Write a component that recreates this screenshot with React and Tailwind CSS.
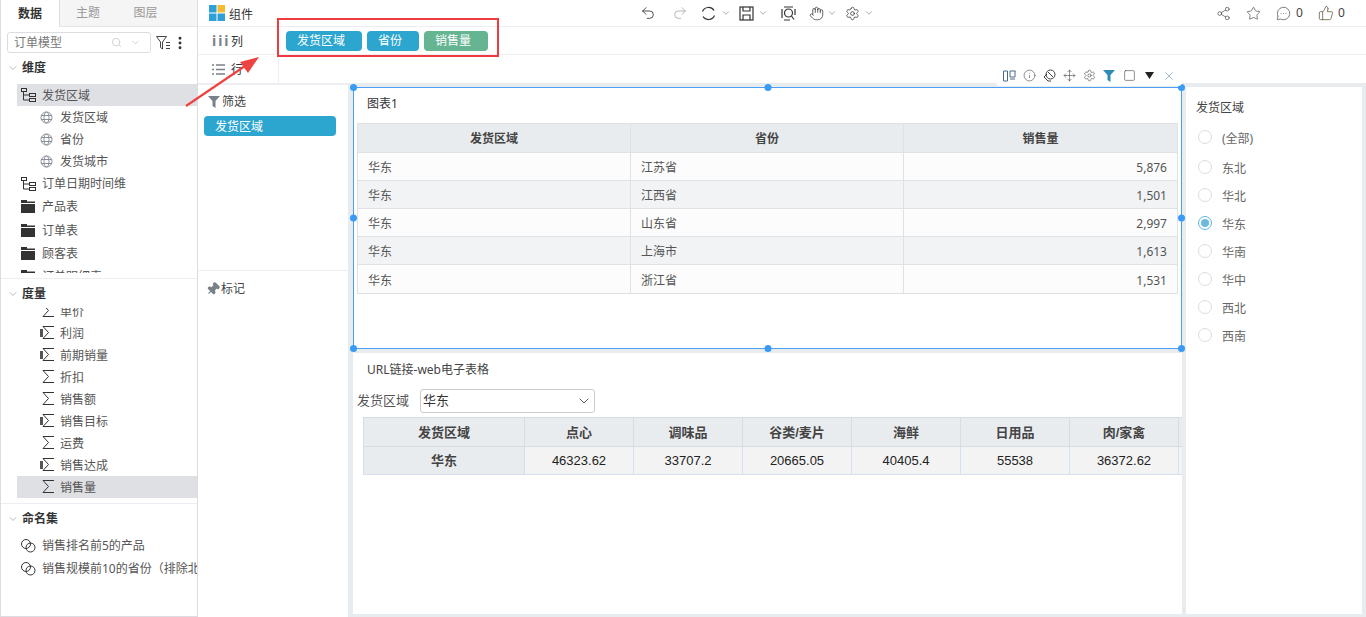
import React from 'react';
import {
  ChevronDown, Search, MoreVertical, Undo2, Redo2, Hand, Settings, Share2, Star,
  MessageCircleMore, ThumbsUp, Info, Move, Square, X, Pin,
} from 'lucide-react';

const font = { fontFamily: '"Noto Sans", "Noto Sans CJK SC", sans-serif' };
const arial = { fontFamily: '"Liberation Sans", "Noto Sans CJK SC", sans-serif' };

function TreeIcon() {
  return (
    <svg width="15" height="14" viewBox="0 0 15 14" fill="none" stroke="#333" strokeWidth="1" className="shrink-0">
      <rect x="0.5" y="0.5" width="5" height="3" />
      <rect x="8.5" y="5.5" width="6" height="3" />
      <rect x="8.5" y="10.5" width="6" height="3" />
      <path d="M2.5 4v8h6M2.5 7h6" />
    </svg>
  );
}

function GlobeIcon() {
  return (
    <svg width="13" height="13" viewBox="0 0 13 13" fill="none" stroke="#8a8f99" strokeWidth="1" className="shrink-0">
      <circle cx="6.5" cy="6.5" r="5.5" />
      <ellipse cx="6.5" cy="6.5" rx="2.5" ry="5.5" />
      <path d="M1 4.500h11M1 8.500h11" />
    </svg>
  );
}

function FolderIcon() {
  return (
    <svg width="14" height="13" viewBox="0 0 14 13" fill="#333" className="shrink-0">
      <path d="M0 0h6v1.500h8V3H0zM0 4h14v9H0z" />
    </svg>
  );
}

function SigmaIcon({ bar }) {
  return (
    <span className="w-[14px] h-[14px] relative shrink-0 block">
      {bar && <span className="absolute left-0 top-[3px] w-[3px] h-[8px] bg-[#555]" />}
      <svg width="12" height="13" viewBox="0 0 12 13" fill="none" stroke="#333" strokeWidth="1" className="absolute left-[2px] top-0">
        <path d="M12 .5H1L6.500 6.500 1 12.500h11" />
      </svg>
    </span>
  );
}

function SetIcon() {
  return (
    <svg width="15" height="14" viewBox="0 0 15 14" fill="none" stroke="#333" strokeWidth="1" className="shrink-0">
      <circle cx="5" cy="5" r="4.500" />
      <circle cx="9.500" cy="8.500" r="4.500" />
    </svg>
  );
}

function Row({ icon, label, indent, active, h = 'h-[22px]' }) {
  return (
    <div className={`flex items-center ${h} ${indent ? 'pl-[23px]' : 'pl-[4px]'} ${active ? 'bg-[#dfe0e3]' : ''}`}>
      <span className={`flex items-center shrink-0 ${indent ? 'w-[20px]' : 'w-[21px]'}`}>{icon}</span>
      <span className="text-[12px] text-[#555] whitespace-nowrap pt-[1px]">{label}</span>
    </div>
  );
}

function SectionHead({ label }) {
  return (
    <div className="flex items-center h-[22px] shrink-0 pl-[6px] gap-[3px]">
      <ChevronDown size={12} strokeWidth={1} color="#777" />
      <span className="text-[12px] font-bold text-[#333]">{label}</span>
    </div>
  );
}

function LeftPanel() {
  return (
    <div className="w-[198px] shrink-0 border-l border-r border-b border-[#dcdde2] flex flex-col bg-white overflow-hidden">
      <div className="flex h-[27px] shrink-0 text-[12px] bg-[#f5f5f5]">
        <div className="w-[59px] bg-white border-r border-[#dcdde2] flex items-center justify-center font-bold text-[#333]">数据</div>
        <div className="w-[56px] border-b border-[#e5e5e8] flex items-center justify-center text-[#999]">主题</div>
        <div className="flex-1 border-b border-[#e5e5e8] flex items-center justify-center text-[#999] pr-[22px]">图层</div>
      </div>
      <div className="flex items-center h-[21px] shrink-0 mt-[5px] ml-[6px]">
        <div className="w-[144px] h-[21px] shrink-0 border border-[#dcdde2] rounded-[3px] flex items-center pl-[6px] pr-[9px] text-[12px] text-[#777]">
          <span className="flex-1">订单模型</span>
          <Search size={11} color="#ccc" />
          <ChevronDown size={11} color="#ccc" className="ml-[8px]" />
        </div>
        <svg width="15" height="14" viewBox="0 0 15 14" fill="none" stroke="#444" strokeWidth="1" className="ml-[5px] shrink-0">
          <path d="M.5.500h10L6.500 6v7l-2-1.500V6zM10 6.500h4M10 9.500h4M10 12.500h4" />
        </svg>
        <MoreVertical size={16} strokeWidth={2.4} color="#333" className="ml-[1px] shrink-0" />
      </div>
      <div className="h-[222px] shrink-0 flex flex-col overflow-hidden mt-[4px] border-b border-[#eeeef2]">
        <SectionHead label="维度" />
        <div className="ml-[16px] mt-[5px] h-[189px] shrink-0 overflow-hidden">
          <Row icon={<TreeIcon />} label="发货区域" active />
          <Row icon={<GlobeIcon />} label="发货区域" indent />
          <Row icon={<GlobeIcon />} label="省份" indent />
          <Row icon={<GlobeIcon />} label="发货城市" indent />
          <Row icon={<TreeIcon />} label="订单日期时间维" h="h-[23px]" />
          <Row icon={<FolderIcon />} label="产品表" h="h-[23px]" />
          <Row icon={<FolderIcon />} label="订单表" h="h-[24px]" />
          <Row icon={<FolderIcon />} label="顾客表" h="h-[23px]" />
          <Row icon={<FolderIcon />} label="订单明细表" h="h-[23px]" />
        </div>
      </div>
      <div className="h-[225px] shrink-0 flex flex-col border-b border-[#eeeef2]">
        <div className="pt-[4px]"><SectionHead label="度量" /></div>
        <div className="ml-[16px] mt-[3px] h-[190px] shrink-0 overflow-hidden">
          <div className="-mt-[8px]">
            <Row icon={<SigmaIcon />} label="单价" indent />
          </div>
          <Row icon={<SigmaIcon bar />} label="利润" indent />
          <Row icon={<SigmaIcon bar />} label="前期销量" indent />
          <Row icon={<SigmaIcon />} label="折扣" indent />
          <Row icon={<SigmaIcon />} label="销售额" indent />
          <Row icon={<SigmaIcon bar />} label="销售目标" indent />
          <Row icon={<SigmaIcon />} label="运费" indent />
          <Row icon={<SigmaIcon bar />} label="销售达成" indent />
          <Row icon={<SigmaIcon />} label="销售量" indent active />
        </div>
      </div>
      <div className="pt-[4px]">
        <SectionHead label="命名集" />
        <div className="ml-[16px] mt-[4px]">
          <Row icon={<SetIcon />} label="销售排名前5的产品" h="h-[23px]" />
          <Row icon={<SetIcon />} label="销售规模前10的省份（排除北京）" h="h-[23px]" />
        </div>
      </div>
    </div>
  );
}

function Caret({ className = '' }) {
  return <ChevronDown size={10} strokeWidth={1.2} color="#555" className={`shrink-0 ${className}`} />;
}

function Toolbar() {
  return (
    <div className="h-[27px] border-b border-[#eeeef2] flex items-center relative shrink-0">
      <div className="w-[80px] shrink-0 flex items-center pl-[11px] gap-[4px] text-[12px] text-[#333]">
        <svg width="16" height="16" viewBox="0 0 16 16" className="shrink-0">
          <rect width="7.500" height="7.500" fill="#2f9fd8" />
          <rect x="8.500" width="7.500" height="7.500" fill="#f6bb33" />
          <rect y="8.500" width="7.500" height="7.500" fill="#2f9fd8" />
          <rect x="8.500" y="8.500" width="7.500" height="7.500" fill="#2f9fd8" />
        </svg>
        <span className="pt-[3px]">组件</span>
      </div>
      <div className="flex items-center ml-[362px]">
        <Undo2 size={16} strokeWidth={1.300} color="#333" className="shrink-0" />
        <Redo2 size={16} strokeWidth={1.300} color="#aaa" className="ml-[16px] shrink-0" />
        <svg width="15" height="15" viewBox="0 0 15 15" fill="none" stroke="#333" strokeWidth="1.200" className="ml-[13px] shrink-0">
          <path d="M1.500 5.500A6.500 6.500 0 0 1 13 4.500M13.500 9.500A6.500 6.500 0 0 1 2 10.500" />
        </svg>
        <Caret className="ml-[5px]" />
        <svg width="15" height="15" viewBox="0 0 15 15" fill="none" stroke="#333" strokeWidth="1.200" className="ml-[8px] shrink-0">
          <rect x="1" y="1" width="13" height="13" />
          <path d="M4 1v4h7V1M4 14V9h7v5" />
        </svg>
        <Caret className="ml-[4px]" />
        <svg width="15" height="15" viewBox="0 0 15 15" fill="none" stroke="#333" strokeWidth="1.200" className="ml-[13px] shrink-0">
          <path d="M3 1h9M3 14h6M1 3v9M14 3v6" />
          <circle cx="7.500" cy="7" r="4" />
          <path d="M10.500 10l2.500 3.500" />
        </svg>
        <Hand size={15} strokeWidth={1.200} color="#333" className="ml-[13px] shrink-0" />
        <Caret className="ml-[3px]" />
        <Settings size={15} strokeWidth={1.200} color="#333" className="ml-[8px] shrink-0" />
        <Caret className="ml-[4px]" />
      </div>
      <div className="absolute right-[21px] top-0 h-[26px] flex items-center text-[12px] text-[#444]">
        <Share2 size={15} strokeWidth={1.200} color="#555" />
        <Star size={15} strokeWidth={1.200} color="#555" className="ml-[15px]" />
        <MessageCircleMore size={15} strokeWidth={1.200} color="#555" className="ml-[15px]" />
        <span className="ml-[5px] w-[7px]">0</span>
        <ThumbsUp size={16} strokeWidth={1.200} color="#6b5a45" className="ml-[15px]" />
        <span className="ml-[4px] w-[7px]">0</span>
      </div>
    </div>
  );
}

function Pill({ w, color, children }) {
  return (
    <span className={`h-[20px] rounded-[4px] flex items-center pl-[11px] pt-[1px] text-[12px] text-white ${w} ${color}`}>{children}</span>
  );
}

function Shelves() {
  return (
    <div className="h-[56px] shrink-0 relative text-[12px] text-[#333]">
      <div className="h-[28px] flex items-center border-b border-[#eeeef2]">
        <div className="w-[81px] shrink-0 flex items-center pl-[14px] gap-[2px]">
          <span className="font-bold text-[14px] text-[#7a8089] tracking-[2px] w-[17px]">iii</span>
          <span className="pt-[2px]">列</span>
        </div>
        <div className="flex items-center gap-[5px] ml-[7px]">
          <Pill w="w-[76px]" color="bg-[#2ca6cf]">发货区域</Pill>
          <Pill w="w-[52px]" color="bg-[#2ca6cf]">省份</Pill>
          <Pill w="w-[64px]" color="bg-[#65b492]">销售量</Pill>
        </div>
      </div>
      <div className="h-[28px] w-[81px] flex items-center pl-[14px] gap-[6px] border-r border-[#eeeef2]">
        <svg width="13" height="11" viewBox="0 0 13 11" stroke="#7a8089" strokeWidth="1.300">
          <path d="M0 1h2M4 1h9M0 5.500h2M4 5.500h9M0 10h2M4 10h9" />
        </svg>
        <span className="pt-[1px]">行</span>
      </div>
      <div className="absolute left-[79px] -top-[9px] w-[222px] h-[39px] border-2 border-[#ee3b3f]" />
    </div>
  );
}

function Marks() {
  return (
    <div className="w-[150px] shrink-0 bg-white border-t-2 border-[#eeeef2] flex flex-col">
      <div className="h-[186px] border-b border-[#eeeef2] pl-[6px] pr-[12px] pt-[9px]">
        <div className="flex items-center text-[12px] text-[#444] h-[16px] pl-[4px] gap-[2px]">
          <svg width="12" height="12" viewBox="0 0 12 12" fill="#7a8089"><path d="M0 0h12L7.500 5v7l-3-2V5z" /></svg>
          筛选
        </div>
        <div className="mt-[6px] h-[20px] w-[132px] rounded-[4px] bg-[#2ca6cf] text-white text-[12px] flex items-center pl-[11px] pt-[1px]">发货区域</div>
      </div>
      <div className="flex items-center text-[12px] text-[#444] pl-[8px] pt-[9px] gap-[1px]">
        <Pin size={14} fill="#7a8089" color="#7a8089" className="rotate-45" />
        标记
      </div>
    </div>
  );
}

function Handle({ className }) {
  return <span className={`absolute w-[7px] h-[7px] rounded-full bg-[#3a9bf5] ${className}`} />;
}

const rows1 = [['江苏省', '5,876'], ['江西省', '1,501'], ['山东省', '2,997'], ['上海市', '1,613'], ['浙江省', '1,531']];

function FloatBar() {
  const cell = 'w-[20px] flex items-center justify-center';
  return (
    <div className="absolute -right-[1px] -top-[23px] w-[186px] h-[21px] bg-white rounded-[4px] flex items-center px-[3px]">
      <span className={cell}>
        <svg width="13" height="12" viewBox="0 0 13 12" fill="none" stroke="#4a6a8a" strokeWidth="1"><path d="M.5 1h4v10h-4zM7 1h5.500M7 1v6h5V1M7 9h5" /></svg>
      </span>
      <span className={cell}><Info size={13} strokeWidth={1.100} color="#444" /></span>
      <span className={cell}>
        <svg width="13" height="13" viewBox="0 0 13 13" fill="none" stroke="#444" strokeWidth="1"><circle cx="7.500" cy="5.500" r="4.500" /><path d="M1 8l4 4h3M1 8l3-3M5 3l5 5" /></svg>
      </span>
      <span className={cell}><Move size={13} strokeWidth={1.100} color="#444" /></span>
      <span className={cell}><Settings size={13} strokeWidth={1.100} color="#444" /></span>
      <span className={cell}>
        <svg width="12" height="12" viewBox="0 0 12 12" fill="#2f8db5"><path d="M0 0h12L7.500 5v7l-3-2V5z" /></svg>
      </span>
      <span className={cell}><Square size={13} strokeWidth={1.100} color="#444" /></span>
      <span className={cell}>
        <svg width="9" height="7" viewBox="0 0 9 7" fill="#222"><path d="M0 0h9L4.500 7z" /></svg>
      </span>
      <span className={cell}><X size={14} strokeWidth={1.100} color="#6f96b5" /></span>
    </div>
  );
}

function ChartOne() {
  return (
    <div className="h-[262px] bg-white border border-[#4a9ff5] relative shrink-0">
      <Handle className="-left-[4px] -top-[4px]" />
      <Handle className="left-1/2 -translate-x-1/2 -top-[4px]" />
      <Handle className="-right-[4px] -top-[4px]" />
      <Handle className="-left-[4px] top-1/2 -translate-y-1/2" />
      <Handle className="-right-[4px] top-1/2 -translate-y-1/2" />
      <Handle className="-left-[4px] -bottom-[4px]" />
      <Handle className="left-1/2 -translate-x-1/2 -bottom-[4px]" />
      <Handle className="-right-[4px] -bottom-[4px]" />
      <FloatBar />
      <div className="pl-[13px] h-[35px] flex items-center text-[12px] text-[#333] pb-[4px]">图表1</div>
      <div className="mx-[3px] border border-[#dfe2e5] text-[12px]">
        <div className="grid grid-cols-[273px_273px_1fr] h-[29px] bg-[#e9ecef] font-bold text-[#444] border-b border-[#dfe2e5]">
          <div className="flex items-center justify-center pt-[1px] border-r border-[#dfe2e5]">发货区域</div>
          <div className="flex items-center justify-center pt-[1px] border-r border-[#dfe2e5]">省份</div>
          <div className="flex items-center justify-center pt-[1px]">销售量</div>
        </div>
        {rows1.map((r, i) => (
          <div key={r[0]} className={`grid grid-cols-[273px_273px_1fr] h-[28px] text-[#555] ${i < 4 ? 'border-b border-[#dfe2e5]' : ''} ${i % 2 ? 'bg-[#f1f3f4]' : 'bg-[#fbfcfb]'}`}>
            <div className="flex items-center pl-[10px] pt-[3px] border-r border-[#dfe2e5]">华东</div>
            <div className="flex items-center pl-[10px] pt-[3px] border-r border-[#dfe2e5]">{r[0]}</div>
            <div className="flex items-center justify-end pr-[10px] pt-[3px]">{r[1]}</div>
          </div>
        ))}
      </div>
    </div>
  );
}

const heads = ['点心', '调味品', '谷类/麦片', '海鲜', '日用品', '肉/家禽', ''];
const vals = ['46323.62', '33707.2', '20665.05', '40405.4', '55538', '36372.62', ''];

function ChartTwo() {
  return (
    <div className="flex-1 bg-white mt-[4px] overflow-hidden">
      <div className="pl-[14px] pt-[8px] h-[36px] text-[12px] text-[#444]">URL链接-web电子表格</div>
      <div className="flex items-center h-[24px] pl-[4px] text-[13px] text-[#555]" style={arial}>
        发货区域
        <div className="ml-[11px] w-[175px] h-[24px] border border-[#ccc] rounded-[3px] flex items-center justify-between pl-[2px] pr-[2px] text-[#333]">
          华东
          <ChevronDown size={16} strokeWidth={1.200} color="#333" />
        </div>
      </div>
      <div className="ml-[10px] mt-[4px] text-[13px] border-t border-[#d5dde0]" style={arial}>
        <div className="flex h-[29px] font-bold text-[#444] bg-[#e9ecef] border-b border-[#d5dde0]">
          <div className="w-[162px] shrink-0 flex items-center justify-center pt-[1px] border-x border-[#d5dde0]">发货区域</div>
          {heads.map((h, i) => (
            <div key={i} className="w-[109px] shrink-0 flex items-center justify-center pt-[1px] border-r border-[#d5dde0]">{h}</div>
          ))}
        </div>
        <div className="flex h-[28px] border-b border-[#d5e0f0]">
          <div className="w-[162px] shrink-0 flex items-center justify-center font-bold text-[#444] bg-[#e9ecef] border-x border-[#d5dde0]">华东</div>
          {vals.map((v, i) => (
            <div key={i} className="w-[109px] shrink-0 flex items-center justify-center bg-[#f3f3f3] border-r border-[#d5e0f8] text-[#222]">{v}</div>
          ))}
        </div>
      </div>
    </div>
  );
}

function Radios() {
  const items = ['东北', '华北', '华东', '华南', '华中', '西北', '西南'];
  return (
    <div className="w-[176px] shrink-0 bg-white ml-[4px] pl-[10px] pt-[12px] text-[12px]">
      <div className="text-[#444] h-[17px] flex items-center">发货区域</div>
      <div className="flex items-center h-[28px] mt-[7px] pl-[2px] text-[#666]">
        <span className="w-[14px] h-[14px] rounded-full border border-[#dcdde2]" />
        <span className="ml-[10px] pt-[3px]">(全部)</span>
      </div>
      <div className="h-[2px]" />
      {items.map((t) => (
        <div key={t} className="flex items-center h-[28px] pl-[2px] text-[#666]">
          {t === '华东' ? (
            <span className="w-[14px] h-[14px] rounded-full border border-[#5fb5e0] flex items-center justify-center">
              <span className="w-[8px] h-[8px] rounded-full bg-[#6cbbdd]" />
            </span>
          ) : (
            <span className="w-[14px] h-[14px] rounded-full border border-[#dcdde2]" />
          )}
          <span className="ml-[10px] pt-[3px]">{t}</span>
        </div>
      ))}
    </div>
  );
}

function Arrow() {
  return (
    <svg width="80" height="56" viewBox="0 0 80 56" className="absolute left-[184px] top-[51px] z-20">
      <path d="M2 55L64 13" stroke="#ee4343" strokeWidth="2.200" />
      <path d="M75 6L56 11l8 11z" fill="#ee4343" />
    </svg>
  );
}

export default function App() {
  return (
    <div className="w-[1366px] h-[617px] flex overflow-hidden bg-white relative" style={font}>
      <LeftPanel />
      <div className="flex-1 flex flex-col min-w-0">
        <Toolbar />
        <Shelves />
        <div className="flex-1 flex bg-[#e8ecef] min-h-0">
          <Marks />
          <div className="flex ml-[5px] pt-[4px] pb-[3px]">
            <div className="w-[829px] flex flex-col shrink-0">
              <ChartOne />
              <ChartTwo />
            </div>
            <Radios />
          </div>
        </div>
      </div>
      <Arrow />
    </div>
  );
}
